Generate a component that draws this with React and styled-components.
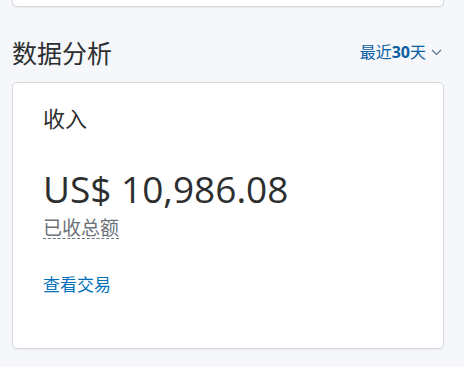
import React from "react";
import styled, { createGlobalStyle } from "styled-components";

const GlobalStyle = createGlobalStyle`
  html, body {
    margin: 0;
    padding: 0;
    background: #f5f7fa;
  }
  body {
    font-family: "Open Sans", "Noto Sans CJK SC", sans-serif;
    color: #2c2e2f;
  }
`;

const Page = styled.div`
  width: 464px;
  height: 367px;
  padding: 0 20px 0 12px;
  box-sizing: border-box;
  overflow: hidden;
`;

const Card = styled.div`
  background: #fff;
  border: 1px solid #d4d9dd;
  border-radius: 5px;
  box-shadow: 0 1px 2px rgba(0, 0, 0, 0.06);
  box-sizing: border-box;
`;

const TopCard = styled(Card)`
  height: 7px;
  border-top: none;
  border-radius: 0 0 5px 5px;
`;

const SectionHeader = styled.div`
  display: flex;
  align-items: center;
  justify-content: space-between;
  height: 52px;
  margin-top: 19px;
`;

const SectionTitle = styled.h2`
  margin: 0;
  font-size: 25px;
  font-weight: 400;
  line-height: 32px;
  font-family: "Noto Sans CJK SC", sans-serif;
  color: #2c2e2f;
`;

const RangePicker = styled.button`
  display: flex;
  align-items: center;
  gap: 5px;
  border: none;
  background: none;
  padding: 0 2px 0 0;
  font-family: "Open Sans", "Noto Sans CJK SC", sans-serif;
  font-size: 16px;
  line-height: 22px;
  color: #0b5ea3;
  cursor: pointer;

  & b {
    font-weight: 700;
  }
`;

const StatCard = styled(Card)`
  margin-top: 4px;
  height: 267px;
  padding: 20px 30px;
`;

const StatLabel = styled.div`
  font-size: 22px;
  line-height: 28px;
  font-family: "Noto Sans CJK SC", sans-serif;
`;

const Amount = styled.div`
  margin-top: 36px;
  font-size: 37px;
  line-height: 44px;
  font-family: "Open Sans", sans-serif;
  color: #2c2e2f;
`;

const Caption = styled.div`
  width: fit-content;
  margin-top: 5px;
  font-size: 19px;
  line-height: 22px;
  color: #6c7378;
  font-family: "Noto Sans CJK SC", sans-serif;
  border-bottom: 1px dashed #6c7378;
`;

const Link = styled.a`
  display: block;
  margin-top: 33px;
  font-size: 17px;
  line-height: 24px;
  color: #0070ba;
  text-decoration: none;
  font-family: "Noto Sans CJK SC", sans-serif;
`;

const Chevron = () => (
  <svg width="11" height="7" viewBox="0 0 11 7" fill="none">
    <path d="M1 1l4.5 4.5L10 1" stroke="#5a7590" strokeWidth="1.2" />
  </svg>
);

export default function App() {
  return (
    <Page>
      <GlobalStyle />
      <TopCard />
      <SectionHeader>
        <SectionTitle>数据分析</SectionTitle>
        <RangePicker>
          <span>
            最近<b>30</b>天
          </span>
          <Chevron />
        </RangePicker>
      </SectionHeader>
      <StatCard>
        <StatLabel>收入</StatLabel>
        <Amount>US$ 10,986.08</Amount>
        <Caption>已收总额</Caption>
        <Link href="#">查看交易</Link>
      </StatCard>
    </Page>
  );
}
